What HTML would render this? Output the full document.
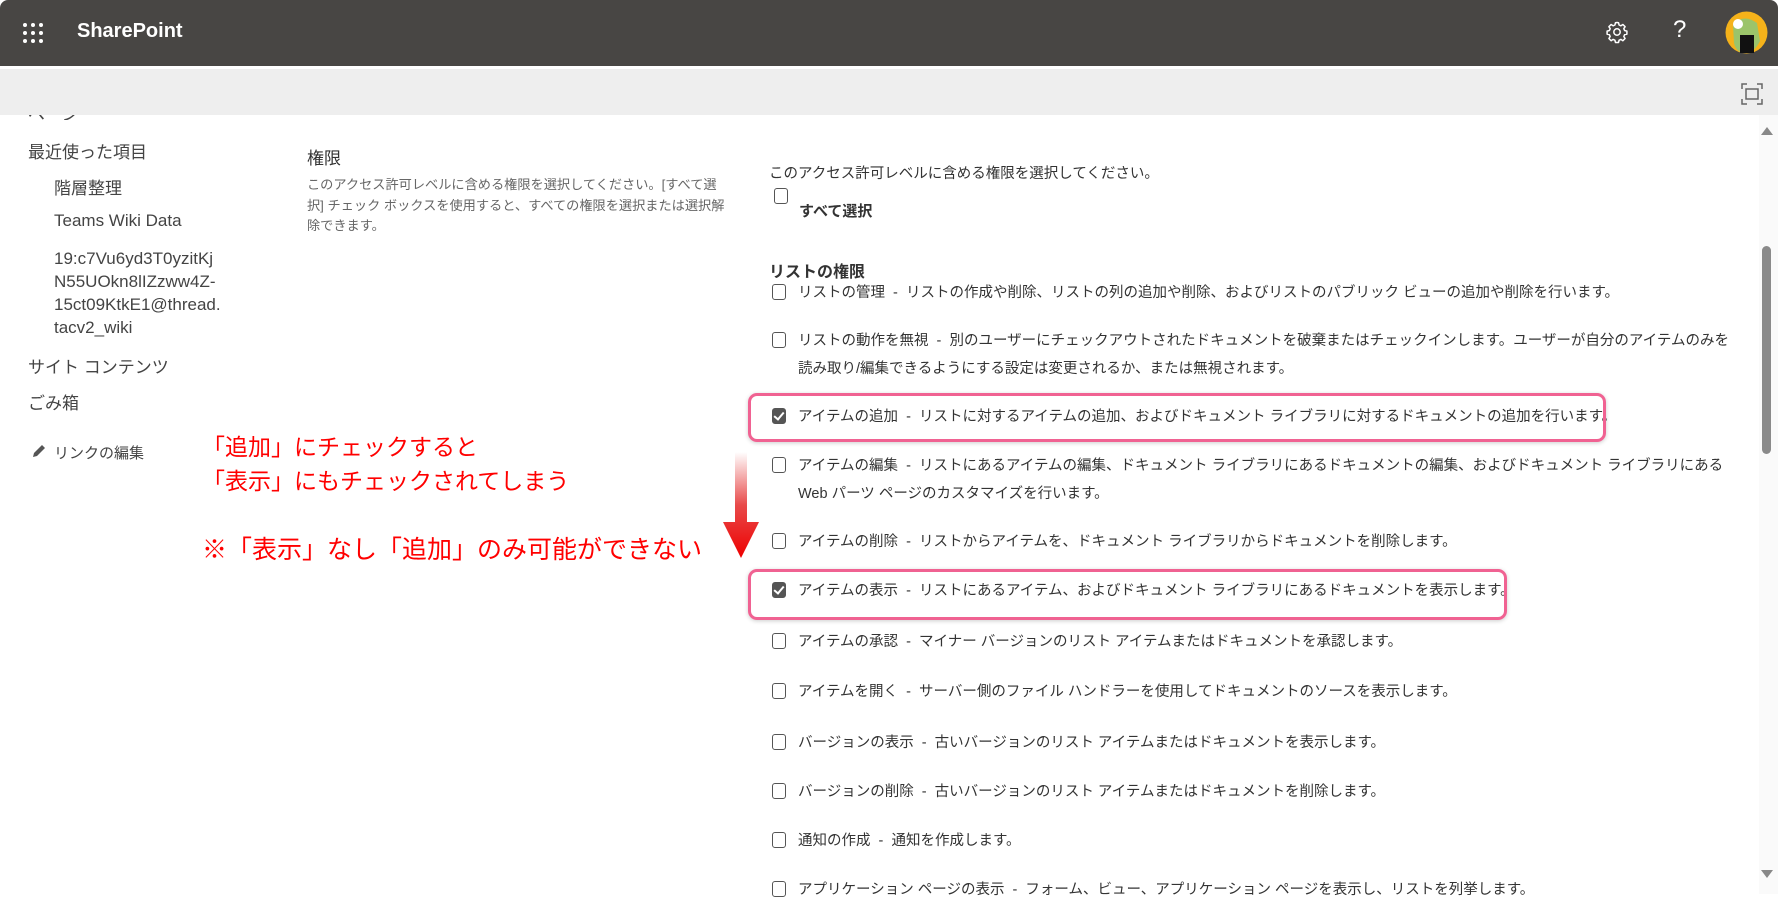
<!DOCTYPE html>
<html><head><meta charset="utf-8"><style>
*{margin:0;padding:0;box-sizing:border-box}
body{width:1778px;height:894px;overflow:hidden;background:#fff;font-family:"Liberation Sans","Noto Sans CJK JP",sans-serif;color:#333;position:relative}
.a{position:absolute;white-space:nowrap}
#hdr{position:absolute;left:0;top:0;width:1778px;height:66px;background:#484644;border-radius:8px 8px 0 0}
#bar{position:absolute;left:0;top:69px;width:1778px;height:46px;background:#eeeeee}
.nav{font-size:17px;color:#444}
.cb{position:absolute;width:14px;height:16px;border:1.5px solid #555;border-radius:3px;background:#fff}
.cb.on{background:#555;border-color:#555}
.cb.on:after{content:"";position:absolute;left:3px;top:1px;width:4px;height:8px;border:solid #fff;border-width:0 2px 2px 0;transform:rotate(40deg)}
.it{position:absolute;left:780px;font-size:14.5px;color:#333;white-space:nowrap;line-height:28px}
.it .cb{left:-8px;top:5px}
.it span{margin-left:18px}
.box{position:absolute;border:3px solid #f06292;border-radius:9px;box-shadow:0 1px 4px rgba(0,0,0,.2)}
.red{position:absolute;left:202px;color:#f00;font-size:23px;white-space:nowrap;font-family:"Noto Sans CJK JP",sans-serif;line-height:32px}
</style></head><body>
<div id="hdr"></div>
<svg class="a" style="left:22px;top:22px" width="22" height="22"><g fill="#fff"><circle cx="3" cy="3" r="2"/><circle cx="11" cy="3" r="2"/><circle cx="19" cy="3" r="2"/><circle cx="3" cy="11" r="2"/><circle cx="11" cy="11" r="2"/><circle cx="19" cy="11" r="2"/><circle cx="3" cy="19" r="2"/><circle cx="11" cy="19" r="2"/><circle cx="19" cy="19" r="2"/></g></svg>
<div class="a" style="left:77px;top:20px;color:#fff;font-size:20px;font-weight:bold">SharePoint</div>
<svg class="a" style="left:1605px;top:20px" width="24" height="24" viewBox="0 0 24 24"><circle cx="12" cy="12" r="3.2" fill="none" stroke="#fff" stroke-width="1.5"/><path d="M12 2.5l1.5.2.6 2.3 1.8.8 2-1.3 2.2 2.2-1.3 2 .8 1.8 2.3.6v3l-2.3.6-.8 1.8 1.3 2-2.2 2.2-2-1.3-1.8.8-.6 2.3h-3l-.6-2.3-1.8-.8-2 1.3-2.2-2.2 1.3-2-.8-1.8-2.3-.6v-3l2.3-.6.8-1.8-1.3-2 2.2-2.2 2 1.3 1.8-.8.6-2.3z" fill="none" stroke="#fff" stroke-width="1.5" stroke-linejoin="round"/></svg>
<div class="a" style="left:1673px;top:16px;color:#fff;font-size:24px">?</div>
<svg class="a" style="left:1725px;top:11px" width="43" height="43"><circle cx="21.5" cy="21.5" r="21" fill="#f5b21a"/><path d="M8 14q10-12 24-2l3 18q-6 12-14 12-10 0-12-10z" fill="#9bc46a"/><path d="M15 24h14v18H15z" fill="#111"/><circle cx="13" cy="13" r="5" fill="#fff"/></svg>
<div id="bar"></div>
<div class="a" style="left:0;top:66px;width:1778px;height:3px;background:#fff"></div>
<svg class="a" style="left:1741px;top:83px" width="22" height="22" fill="none" stroke="#666" stroke-width="1.5"><path d="M1 6V1h5M16 1h5v5M21 16v5h-5M6 21H1v-5"/><rect x="5" y="6" width="12" height="10"/></svg>
<div class="a" style="left:1759px;top:115px;width:19px;height:779px;background:#fafafa"></div>
<div class="a" style="left:1761px;top:127px;width:0;height:0;border:6px solid transparent;border-bottom:8px solid #888;border-top:0"></div>
<div class="a" style="left:1762px;top:246px;width:9px;height:208px;background:#8a8a8a;border-radius:5px"></div>
<div class="a" style="left:1761px;top:870px;width:0;height:0;border:6px solid transparent;border-top:8px solid #888;border-bottom:0"></div>
<div class="a nav" style="left:28px;top:115px;height:5px;overflow:hidden"><div style="margin-top:-15px">ページ</div></div>
<div class="a nav" style="left:28px;top:138px">最近使った項目</div>
<div class="a nav" style="left:54px;top:174px">階層整理</div>
<div class="a nav" style="left:54px;top:211px">Teams Wiki Data</div>
<div class="a nav" style="left:54px;top:247px;line-height:23px">19:c7Vu6yd3T0yzitKj<br>N55UOkn8lIZzww4Z-<br>15ct09KtkE1@thread.<br>tacv2_wiki</div>
<div class="a nav" style="left:28px;top:353px">サイト コンテンツ</div>
<div class="a nav" style="left:28px;top:389px">ごみ箱</div>
<svg class="a" style="left:31px;top:444px" width="15" height="15"><path d="M2 13l1-4 8-8 3 3-8 8z" fill="#555"/></svg>
<div class="a nav" style="left:54px;top:442px;font-size:15px">リンクの編集</div>
<div class="a" style="left:307px;top:144px;font-size:17px;color:#333">権限</div>
<div class="a" style="left:307px;top:175px;width:418px;white-space:normal;font-size:13.2px;line-height:20.5px;color:#666">このアクセス許可レベルに含める権限を選択してください。[すべて選択] チェック ボックスを使用すると、すべての権限を選択または選択解除できます。</div>
<div class="a" style="left:769px;top:162px;font-size:14.5px">このアクセス許可レベルに含める権限を選択してください。</div>
<div class="cb" style="left:774px;top:188px"></div>
<div class="a" style="left:799px;top:200px;font-size:15px;font-weight:bold">すべて選択</div>
<div class="a" style="left:769px;top:258px;font-size:16px;font-weight:bold">リストの権限</div>
<div class="it" style="top:279px"><div class="cb"></div><span>リストの管理 &nbsp;- &nbsp;リストの作成や削除、リストの列の追加や削除、およびリストのパブリック ビューの追加や削除を行います。</span></div>
<div class="it" style="top:327px"><div class="cb"></div><span>リストの動作を無視 &nbsp;- &nbsp;別のユーザーにチェックアウトされたドキュメントを破棄またはチェックインします。ユーザーが自分のアイテムのみを</span><br><span>読み取り/編集できるようにする設定は変更されるか、または無視されます。</span></div>
<div class="it" style="top:403px"><div class="cb on"></div><span>アイテムの追加 &nbsp;- &nbsp;リストに対するアイテムの追加、およびドキュメント ライブラリに対するドキュメントの追加を行います。</span></div>
<div class="it" style="top:452px"><div class="cb"></div><span>アイテムの編集 &nbsp;- &nbsp;リストにあるアイテムの編集、ドキュメント ライブラリにあるドキュメントの編集、およびドキュメント ライブラリにある</span><br><span>Web パーツ ページのカスタマイズを行います。</span></div>
<div class="it" style="top:528px"><div class="cb"></div><span>アイテムの削除 &nbsp;- &nbsp;リストからアイテムを、ドキュメント ライブラリからドキュメントを削除します。</span></div>
<div class="it" style="top:577px"><div class="cb on"></div><span>アイテムの表示 &nbsp;- &nbsp;リストにあるアイテム、およびドキュメント ライブラリにあるドキュメントを表示します。</span></div>
<div class="it" style="top:628px"><div class="cb"></div><span>アイテムの承認 &nbsp;- &nbsp;マイナー バージョンのリスト アイテムまたはドキュメントを承認します。</span></div>
<div class="it" style="top:678px"><div class="cb"></div><span>アイテムを開く &nbsp;- &nbsp;サーバー側のファイル ハンドラーを使用してドキュメントのソースを表示します。</span></div>
<div class="it" style="top:729px"><div class="cb"></div><span>バージョンの表示 &nbsp;- &nbsp;古いバージョンのリスト アイテムまたはドキュメントを表示します。</span></div>
<div class="it" style="top:778px"><div class="cb"></div><span>バージョンの削除 &nbsp;- &nbsp;古いバージョンのリスト アイテムまたはドキュメントを削除します。</span></div>
<div class="it" style="top:827px"><div class="cb"></div><span>通知の作成 &nbsp;- &nbsp;通知を作成します。</span></div>
<div class="it" style="top:876px"><div class="cb"></div><span>アプリケーション ページの表示 &nbsp;- &nbsp;フォーム、ビュー、アプリケーション ページを表示し、リストを列挙します。</span></div>
<div class="box" style="left:748px;top:393px;width:858px;height:49px"></div>
<div class="box" style="left:748px;top:569px;width:759px;height:51px"></div>
<div class="red" style="top:429px">「追加」にチェックすると</div>
<div class="red" style="top:463px">「表示」にもチェックされてしまう</div>
<div class="red" style="top:532px;font-size:25px">※「表示」なし「追加」のみ可能ができない</div>
<svg class="a" style="left:722px;top:452px" width="38" height="108"><defs><linearGradient id="g" x1="0" y1="0" x2="0" y2="1"><stop offset="0" stop-color="#fff"/><stop offset=".5" stop-color="#e84a4a"/><stop offset="1" stop-color="#e00"/></linearGradient></defs><path d="M13 0h12v70h12L19 106 1 70h12z" fill="url(#g)"/></svg>
</body></html>
